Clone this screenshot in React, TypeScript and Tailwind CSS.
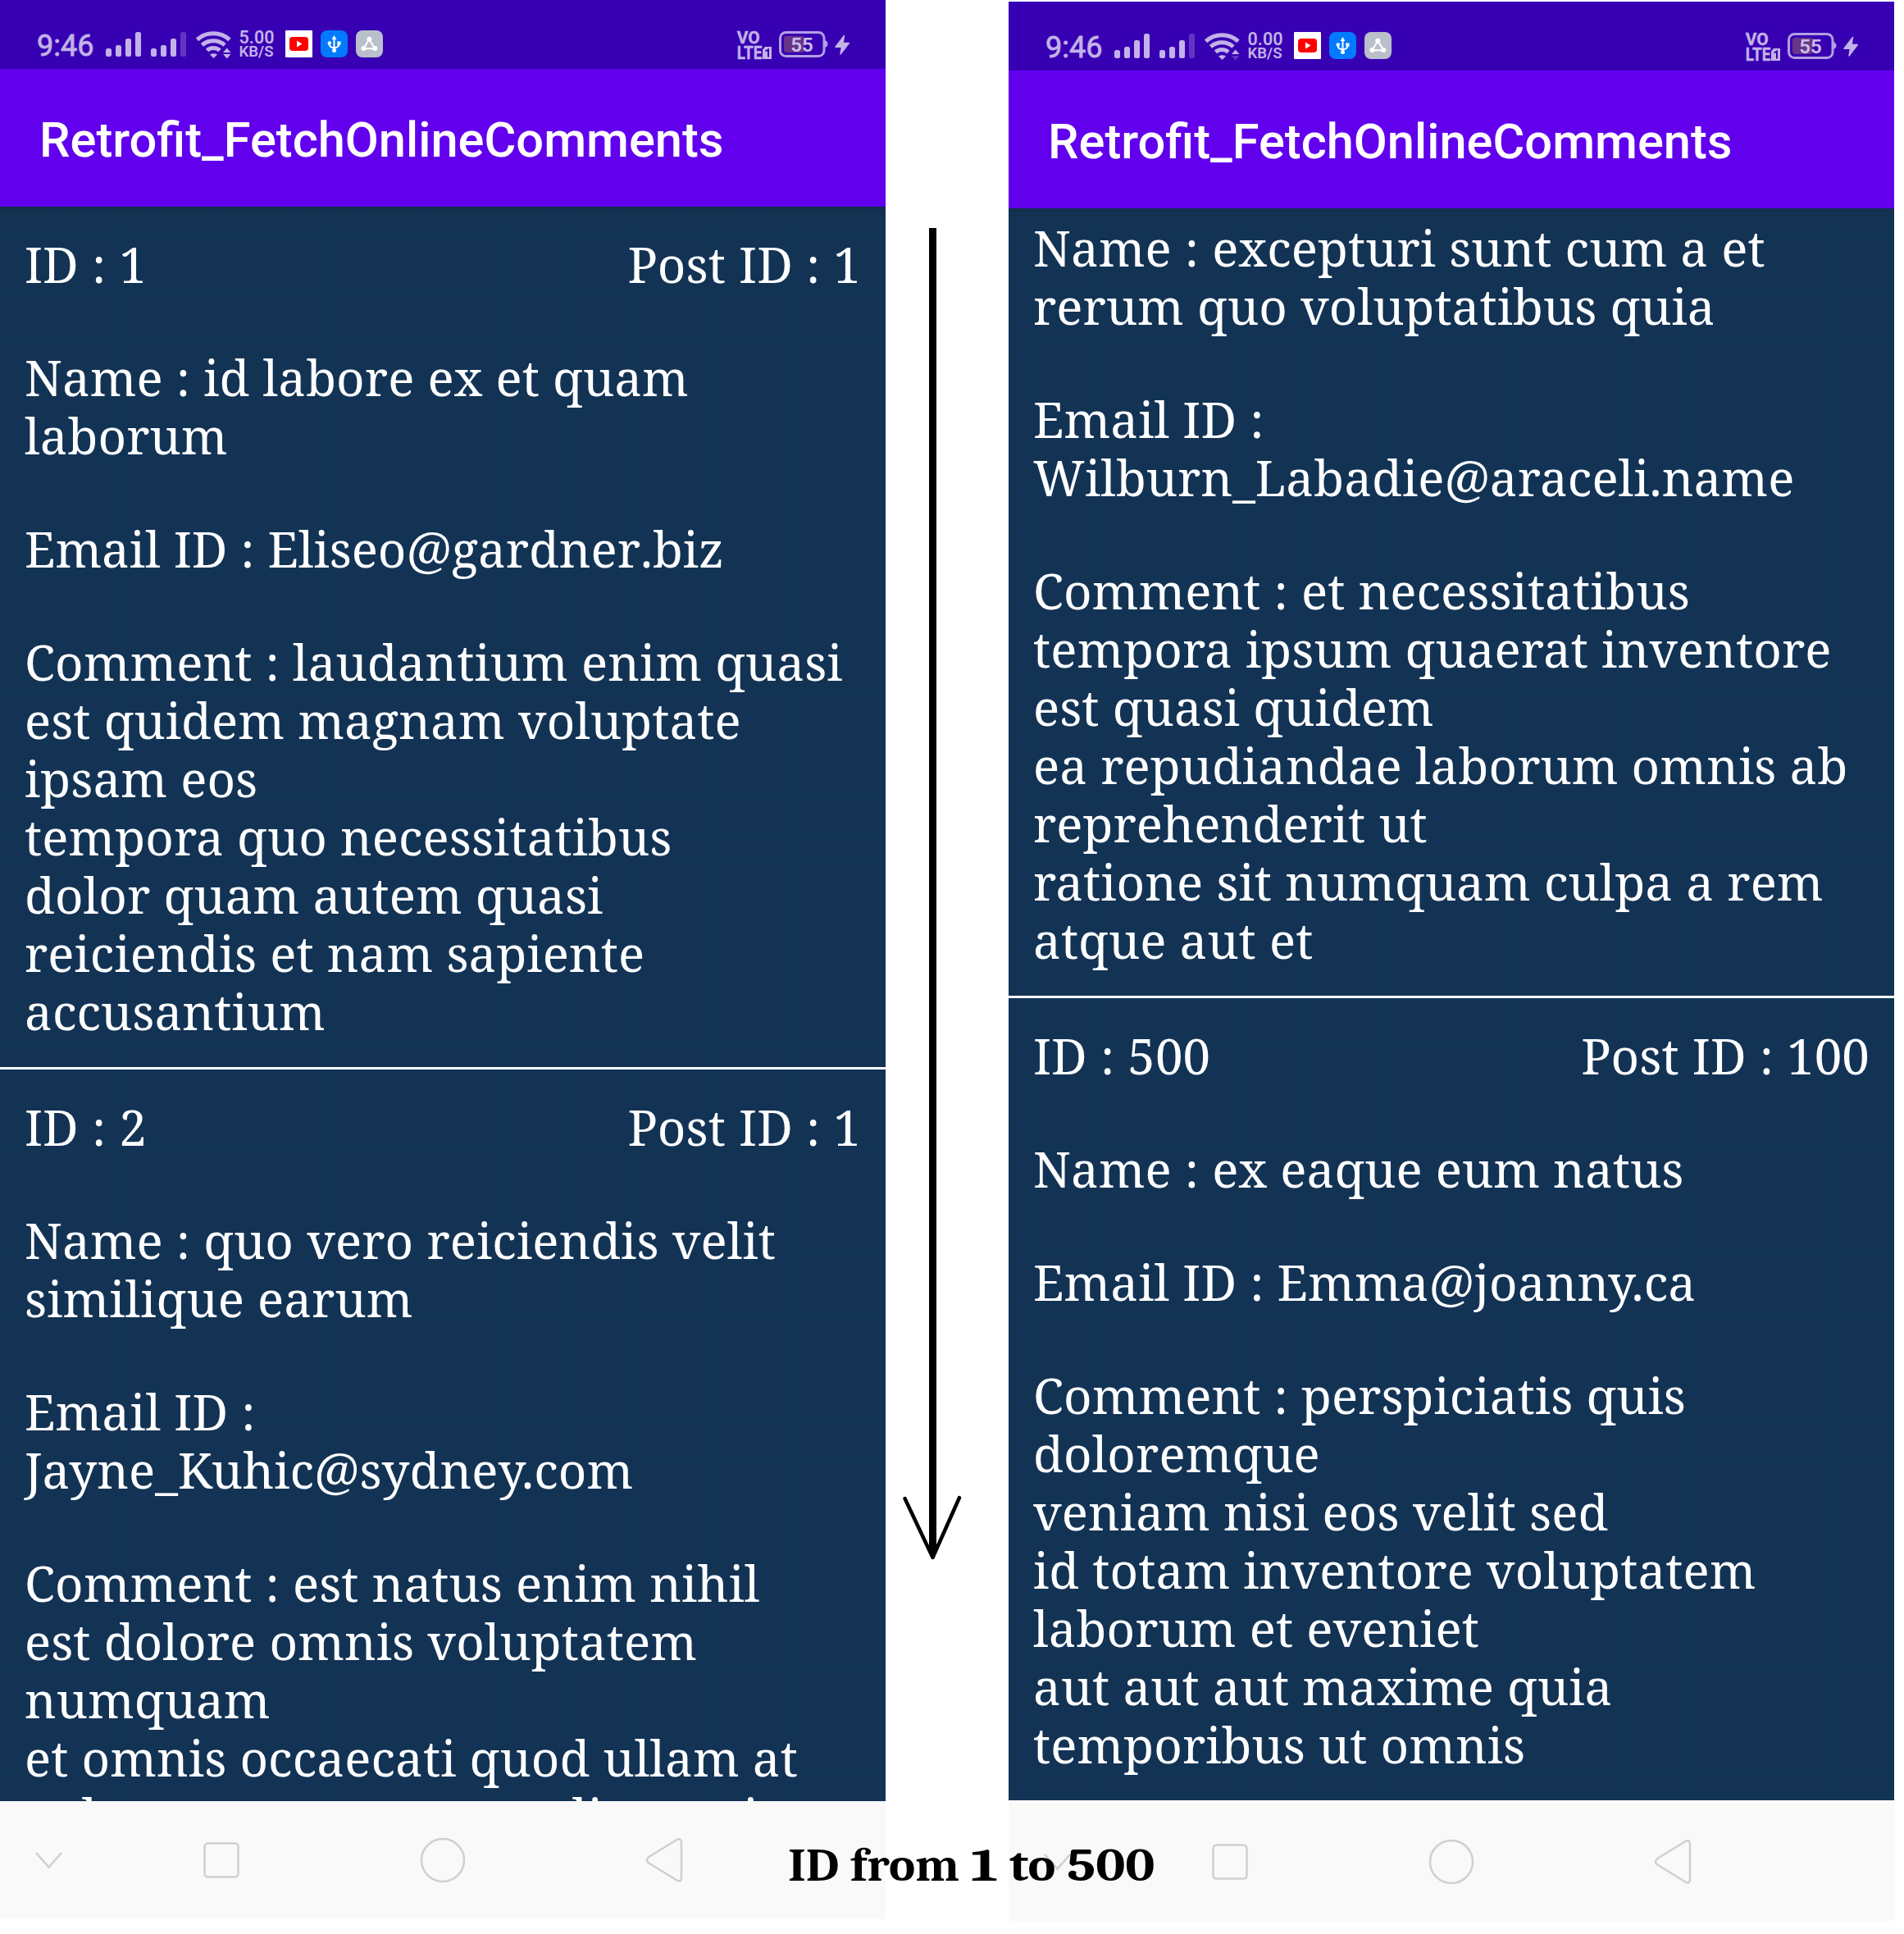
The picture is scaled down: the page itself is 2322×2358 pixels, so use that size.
import { useLayoutEffect, useRef, useState } from "react";

type Block = string[];

/* A heading line drawn at a given width. */
function FitLine({ text, width }: { text: string; width: number }) {
  const ref = useRef<HTMLSpanElement>(null);
  const [k, setK] = useState(1);
  useLayoutEffect(() => {
    if (ref.current) setK(width / ref.current.offsetWidth);
  }, [width, text]);
  return (
    <div className="flex justify-start">
      <span ref={ref} className="block shrink-0 origin-left whitespace-pre" style={{ transform: `scaleX(${k})` }}>
        {text}
      </span>
    </div>
  );
}

function TextBlock({ lines }: { lines: Block }) {
  return (
    <div>
      {lines.map((t) => (
        <div
          key={t}
          className={
            t.includes("r.")
              ? "h-[71px] tracking-normal whitespace-pre [font-kerning:none]"
              : "h-[71px] whitespace-pre"
          }
        >
          {t}
        </div>
      ))}
    </div>
  );
}

interface Comment {
  id?: string;
  post?: string;
  blocks: Block[];
}

const left: Comment[] = [
  {
    id: "ID : 1",
    post: "Post ID : 1",
    blocks: [
      ["Name : id labore ex et quam", "laborum"],
      ["Email ID : Eliseo@gardner.biz"],
      [
        "Comment : laudantium enim quasi",
        "est quidem magnam voluptate",
        "ipsam eos",
        "tempora quo necessitatibus",
        "dolor quam autem quasi",
        "reiciendis et nam sapiente",
        "accusantium",
      ],
    ],
  },
  {
    id: "ID : 2",
    post: "Post ID : 1",
    blocks: [
      ["Name : quo vero reiciendis velit", "similique earum"],
      ["Email ID :", "Jayne_Kuhic@sydney.com"],
      [
        "Comment : est natus enim nihil",
        "est dolore omnis voluptatem",
        "numquam",
        "et omnis occaecati quod ullam at",
        "voluptatem error expedita pariatur",
      ],
    ],
  },
];

const right: Comment[] = [
  {
    blocks: [
      ["Name : excepturi sunt cum a et", "rerum quo voluptatibus quia"],
      ["Email ID :", "Wilburn_Labadie@araceli.name"],
      [
        "Comment : et necessitatibus",
        "tempora ipsum quaerat inventore",
        "est quasi quidem",
        "ea repudiandae laborum omnis ab",
        "reprehenderit ut",
        "ratione sit numquam culpa a rem",
        "atque aut et",
      ],
    ],
  },
  {
    id: "ID : 500",
    post: "Post ID : 100",
    blocks: [
      ["Name : ex eaque eum natus"],
      ["Email ID : Emma@joanny.ca"],
      [
        "Comment : perspiciatis quis",
        "doloremque",
        "veniam nisi eos velit sed",
        "id totam inventore voluptatem",
        "laborum et eveniet",
        "aut aut aut maxime quia",
        "temporibus ut omnis",
      ],
    ],
  },
];

function Item({ c }: { c: Comment }) {
  return (
    <div className="border-b-[3px] border-white px-[30px] pb-[32px]">
      {c.id && c.post && (
        <div className="mb-[67px] flex h-[106px] justify-between pt-[35px]">
          <span>{c.id}</span>
          <span>{c.post}</span>
        </div>
      )}
      <div className="flex flex-col gap-[67px]">
        {c.blocks.map((b, i) => (
          <TextBlock key={i} lines={b} />
        ))}
      </div>
    </div>
  );
}

function StatusIcons({ speed, idle }: { speed: string; idle: boolean }) {
  return (
    <svg className="block h-[84px] w-[1080px]" viewBox="0 0 1080 84" fill="#c3b2e9">
      <text x="45" y="68" fontFamily="Roboto" fontSize="36.5" textLength="69.5" lengthAdjust="spacingAndGlyphs" stroke="#c3b2e9" strokeWidth="0.8">9:46</text>
      <rect x="129" y="59" width="7" height="10" rx="2.5" />
      <rect x="141" y="55" width="7" height="14" rx="2.5" />
      <rect x="153" y="47" width="7" height="22" rx="2.5" />
      <rect x="165" y="39" width="7" height="30" rx="2.5" />
      <rect x="184" y="59" width="7" height="10" rx="2.5" />
      <rect x="196" y="55" width="7" height="14" rx="2.5" />
      <rect x="208" y="47" width="7" height="22" rx="2.5" />
      <rect x="220" y="39" width="7" height="30" rx="2.5" fill="#6135c2" />
      <g fill="none" stroke="#c3b2e9" strokeWidth="5">
        <path d="M240.500 48.300A29.500 29.500 0 0 1 280 48.300" />
        <path d="M246.500 55A20.500 20.500 0 0 1 274 55" />
        <path d="M252.500 61.500A11.500 11.500 0 0 1 268 61.500" />
      </g>
      <path d="M256 66.500Q260.500 64 265 66.500L260.500 71Z" />
      <path d="M272 64H281.500L276.700 58.500Z" />
      <path d="M272 66H281.500L276.700 71.500Z" fill={idle ? "#6135c2" : "#c3b2e9"} />
      <g fontFamily="Roboto" fontWeight="600">
        <text x="291.500" y="53" fontSize="21.500" textLength="43" lengthAdjust="spacingAndGlyphs">{speed}</text>
        <text x="291.500" y="69.300" fontSize="19" textLength="42" lengthAdjust="spacingAndGlyphs">KB/S</text>
      </g>
      <rect x="348" y="37" width="33" height="33" rx="1" fill="#fff" />
      <rect x="353" y="45" width="23" height="17" rx="4" fill="#f00" />
      <path d="M362 49.500V57.500L368.500 53.500Z" fill="#fff" />
      <rect x="391" y="37" width="33" height="33" rx="8" fill="#007aff" />
      <path d="M407.500 47V62M401.500 53Q401.500 58 407.500 58.500Q413.500 58 413.500 53" fill="none" stroke="#fff" strokeWidth="2" />
      <g fill="#fff">
        <path d="M407.500 43L410.500 48H404.500Z" />
        <circle cx="407.500" cy="61.500" r="2.500" />
        <circle cx="401.800" cy="52.500" r="2.200" />
        <rect x="411.300" y="50.500" width="4.200" height="4.200" />
      </g>
      <rect x="434" y="37" width="33" height="33" rx="8" fill="#babfcc" />
      <path d="M450.300 48L443.300 59.300H457.300Z" fill="none" stroke="#fff" strokeWidth="2" />
      <g fill="#fff">
        <circle cx="450.300" cy="47.700" r="3" />
        <circle cx="443.500" cy="59" r="3" />
        <circle cx="457.300" cy="59" r="3" />
      </g>
      <g fontFamily="Roboto" fontWeight="700" stroke="#c3b2e9" strokeWidth="0.4">
        <text x="898.800" y="53.200" fontSize="21" textLength="28" lengthAdjust="spacingAndGlyphs">VO</text>
        <text x="898.800" y="71.700" fontSize="22" textLength="30.500" lengthAdjust="spacingAndGlyphs">LTE</text>
      </g>
      <path d="M933 57H941V72H930V60.500Z" />
      <path d="M933.500 62.500L937 60.500V69.500" fill="none" stroke="#3700b3" strokeWidth="2" />
      <rect x="951.500" y="39.500" width="53.500" height="29" rx="7" fill="none" stroke="#b39fe3" strokeWidth="3" />
      <path d="M1006 49Q1009.500 50 1009.500 53.500T1006 58Z" fill="#b39fe3" />
      <rect x="956" y="44" width="25" height="20" rx="3" fill="#693587" />
      <text x="964.300" y="62.700" fontFamily="Roboto" fontSize="23.500" fontWeight="600" textLength="27.500" lengthAdjust="spacingAndGlyphs" fill="#cdbfec">55</text>
      <path d="M1029.500 43.500L1019 57.300H1026.500L1025 66L1035.300 52.500H1028Z" stroke="#c3b2e9" strokeWidth="1.5" strokeLinejoin="round" />
    </svg>
  );
}

function NavBar() {
  return (
    <div className="h-[144px] shrink-0 bg-[#f9f9f9]">
      <svg className="block h-[144px] w-[1080px]" viewBox="0 0 1080 144" fill="none" stroke="#cfcfcf" strokeWidth="2.5">
        <path d="M44 63L59.500 80.500L75 63" />
        <rect x="249.500" y="51.500" width="41" height="41" rx="4" />
        <circle cx="540" cy="72" r="26" />
        <path d="M823 48.500Q831 43 831 51V93Q831 101 823 95L792 76Q786 72 792 67.500Z" />
      </svg>
    </div>
  );
}

function Phone({ items, speed, idle, second = false }: { items: Comment[]; speed: string; idle: boolean; second?: boolean }) {
  return (
    <div className={second ? "mt-[2px] flex h-[2340px] w-[1080px] flex-col" : "flex h-[2340px] w-[1080px] flex-col"}>
      <div className="h-[84px] shrink-0 bg-[#3700b3]">
        <StatusIcons speed={speed} idle={idle} />
      </div>
      <div className="flex h-[168px] shrink-0 items-center bg-[#6200ee] pt-[5px] pl-[48px] font-['Roboto'] text-[60px] font-medium text-white">
        <div className="h-[70px] leading-[70px]">
          <FitLine text="Retrofit_FetchOnlineComments" width={835} />
        </div>
      </div>
      <div className="min-h-0 flex-1 overflow-hidden bg-[#133355] bg-gradient-to-b from-[#122e4c] to-[#133355] to-[14px] font-['Noto_Serif','DejaVu_Serif_Condensed','DejaVu_Serif',serif] text-[60px] leading-[71px] tracking-[0.1px] text-white [word-spacing:0.4px]">
        <div className={second ? "pt-[13px]" : ""}>
          {items.map((c, i) => (
            <Item key={i} c={c} />
          ))}
        </div>
      </div>
      <NavBar />
    </div>
  );
}

const caption: [string, number][] = [
  ["ID", 62],
  ["from", 133],
  ["1", 33],
  ["to", 56],
  ["500", 107],
];

export default function App() {
  return (
    <div className="relative flex h-[2358px] w-[2322px] items-start overflow-hidden bg-white">
      <Phone items={left} speed="5.00" idle={false} />
      <div className="w-[150px] shrink-0 pt-[278px]">
        <svg className="block h-[1630px] w-[150px]" viewBox="0 0 150 1630" fill="none" stroke="#000">
          <path d="M57.500 0V1612" strokeWidth="9" />
          <path d="M23.500 1549L57.500 1621L90 1548" strokeWidth="4.500" strokeLinecap="round" strokeLinejoin="round" />
          <path d="M53 1605H62L58 1622Z" fill="#000" />
        </svg>
      </div>
      <Phone items={right} speed="0.00" idle second />
      <div className="absolute left-[961px] top-[2240px] flex h-[70px] gap-[14px] font-['Caladea','Cambria','Noto_Serif','DejaVu_Serif',serif] text-[57px] font-semibold leading-[70px] text-black">
        {caption.map(([word, width]) => (
          <div key={word} className="shrink-0" style={{ width }}>
            <FitLine text={word} width={width} />
          </div>
        ))}
      </div>
    </div>
  );
}
